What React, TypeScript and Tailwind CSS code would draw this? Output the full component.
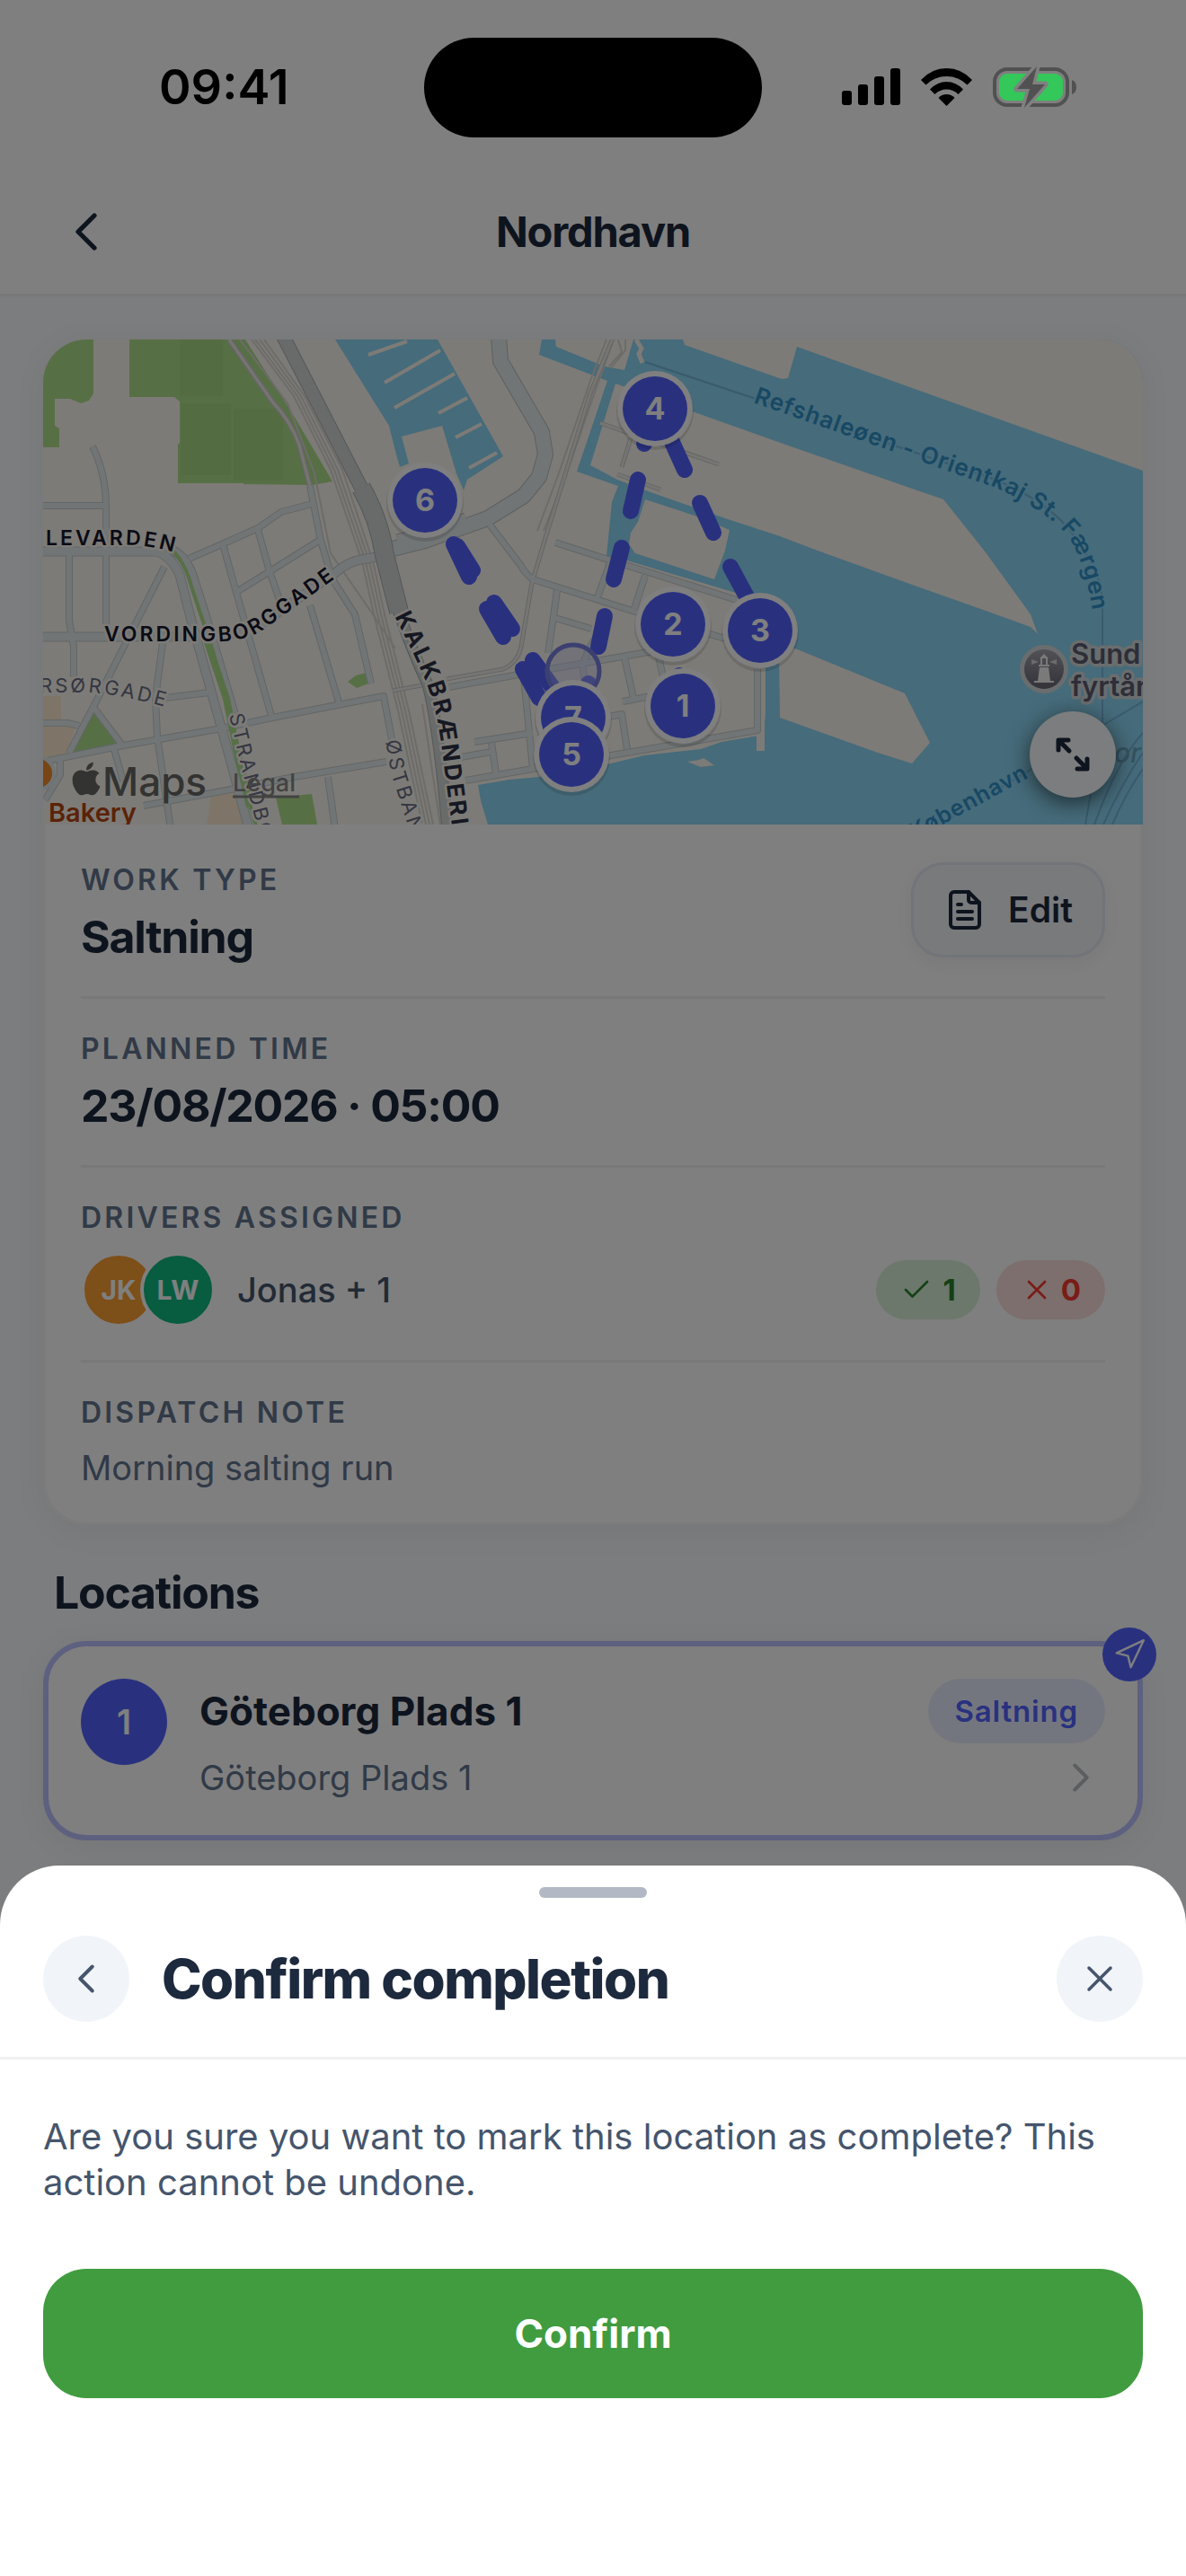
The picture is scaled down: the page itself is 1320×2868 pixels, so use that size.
import React from 'react'
import { Check, ChevronLeft, ChevronRight, Navigation, X } from 'lucide-react'
import { FaApple } from 'react-icons/fa'

const bigRoads = [
  { d: 'M507 -4 L509 24 L555 103 L559 128 L552 153 L535 174 L495 199 L425 224 L385 234', w: 16 },
  { d: 'M394 222 L430 212 L470 198', w: 9 },
]

const mainRoads = [
  { d: 'M267 -4 L354 165', w: 14 },
  { d: 'M354 165 Q374 200 380 240 L396 303', w: 20 },
  { d: 'M393 296 Q412 350 428 384 Q440 430 450 545', w: 11 },
]

const avenues = [
  'M-4 236 L125 236 Q142 240 152 262 L165 313 L205 456 L229 545',
  'M140 232 Q158 240 166 262 L179 303 L209 405 L213 420',
  'M-4 331 L192 331 L232 324 L325 260 Q340 246 360 244 L392 238',
]

const streets = [
  'M55 119 Q70 150 70 185 L70 317',
  'M0 185 L70 185',
  'M162 244 L199 228 L239 210 L265 192 L299 183',
  'M297 163 L309 224 L322 267 L347 306 L365 383',
  'M200 228 L225 317 L254 419',
  'M239 212 L252 258 L265 296',
  'M217 280 L307 224',
  'M297 296 L329 404',
  'M29 240 L29 313 L34 342 L34 376',
  'M135 253 L59 403 L29 460',
  'M133 338 L125 399 L127 442 L142 545',
  'M135 399 L185 393',
  'M-4 427 L27 427 L40 430',
  'M55 408 L89 453',
  'M5 469 L89 452 L199 433 L255 421 L379 397 L390 455',
  'M112 519 L209 501 L279 487 L382 470',
  'M317 487 L325 545',
  'M79 456 L89 492',
  'M19 469 L19 485 L2 513',
  'M497 206 L532 252 Q536 260 545 267 L659 303 L759 333',
  'M570 226 L632 246 L772 290',
  'M632 246 L617 287',
  'M670 263 L657 303',
  'M572 279 Q568 310 562 349',
  'M570 310 L610 322',
  'M622 322 L610 340 L600 362 L604 385',
  'M452 387 L535 372 L679 347',
  'M535 376 L545 478',
  'M647 354 L657 399',
  'M645 403 L682 396',
  'M685 353 L692 385',
  'M625 421 L644 417 L650 456',
  'M470 491 L545 478 L685 454 L795 435 L795 367',
  'M480 448 L545 438',
  'M499 449 L504 483',
  'M465 465 L499 459',
]

const paths = [
  'M635 -4 L609 60 L559 221 L544 271 L532 342 Q528 360 512 367 L449 378',
  'M389 391 L432 383',
  'M620 93 L752 139',
  'M654 110 L644 142',
  'M639 150 L687 167',
]

const rails = [
  'M232 0 L279 63 L320 145 L355 247 L369 310 L395 413 L422 540',
  'M236 0 L283 63 L324 145 L359 247 L373 310 L399 413 L426 540',
  'M241 0 L287 63 L328 145 L363 247 L377 310 L403 413 L430 540',
  'M246 0 L291 63 L333 145 L367 247 L381 310 L407 413 L434 540',
  'M219 0 L272 71 L302 149 L320 238 L365 303 L392 344',
  'M422 406 L442 540',
  'M627 0 L609 46 L574 149 L550 213',
  'M635 0 L617 50 L582 151 L557 213',
  'M640 0 L644 14 L630 30 M648 0 L648 12 L632 32',
]

const piers = [
  'M362 17 L405 2',
  'M380 48 L442 12',
  'M391 76 L458 38',
  'M440 82 L472 65',
  'M459 109 L488 94',
  'M474 143 L505 126',
]

const routeDashes = [
  'M670 112 L669 116',
  'M662 156 L654 191',
  'M644 232 L635 267',
  'M625 308 L618 342',
  'M607 383 L602 404',
  'M699 112 L714 145',
  'M731 182 L746 215',
  'M765 253 L785 290',
  'M708 374 L708 380',
  'M457 228 L474 264',
  'M461 230 L478 257',
  'M494 300 L512 331',
  'M502 293 L522 322',
  'M534 367 L552 399',
  'M545 357 L569 390',
]

const stops = [
  { n: 6, x: 425, y: 179 },
  { n: 4, x: 681, y: 77 },
  { n: 2, x: 701, y: 317 },
  { n: 3, x: 798, y: 324 },
  { n: 1, x: 712, y: 408 },
  { n: 7, x: 590, y: 421 },
  { n: 5, x: 588, y: 462 },
]

const land = '#faf6ee'
const water = '#8cd6f4'

function RouteMap() {
  return (
    <svg
      viewBox="0 0 1224 540"
      preserveAspectRatio="xMidYMid slice"
      className="block h-[540px] w-full"
      role="img"
      aria-label="Route map"
    >
      <defs>
        <path id="levarden" d="M3 229 L100 229 Q126 230 156 240" />
        <path id="vording" d="M68 336 L200 336 Q230 335 252 318 L350 248" />
        <path id="korsor" d="M-4 393 L55 393 Q95 397 150 413" />
        <path id="strand" d="M207 418 L221 478 L243 560" />
        <path id="ostban" d="M381 447 L388 485 L412 560" />
        <path id="kalk" d="M391 308 Q410 345 424 376 Q438 410 443 450 L460 580" />
        <path id="ferry" d="M790 70 L949 126 L1060 165 Q1115 190 1138 216 Q1165 250 1172 340" />
        <path id="havn" d="M970 557 L1122 474" />
        <linearGradient id="poi" x1="0" y1="0" x2="0" y2="1">
          <stop offset="0" stopColor="#a3a3ad" />
          <stop offset="1" stopColor="#666672" />
        </linearGradient>
      </defs>

      <rect width="1224" height="540" fill={land} />

      {/* parks and blocks */}
      <g fill="#aede8a">
        <path d="M0 0H56V60L51 68L42 71L30 66H13V96L18 99V120H0Z" />
        <path d="M96 0H225L279 85L322 158L300 162L223 161V160H150V117L152 115V69L146 64H96Z" />
        <path d="M55 413L85 452L32 462Z" />
        <path d="M339 381L348 374L360 371L362 383L349 388Z" />
        <path d="M259 510L299 506L305 540H266Z" />
      </g>
      <g fill="#a8d885">
        <rect x="152" width="48" height="63" />
        <rect x="154" y="71" width="55" height="80" />
        <rect x="212" y="77" width="55" height="80" />
      </g>
      <path d="M0 397H20V430H36L26 463L0 465ZM187 508L219 505L229 540H182Z" fill="#fdebd0" />

      {/* harbour */}
      <g fill={water}>
        <path d="M325 0L385 96L392 124L397 142L407 138L399 108L444 96L460 149L468 168L472 156L512 130L439 0Z" />
        <path d="M555 0L552 17L628 46L594 147L640 163L633 181L627 241L650 246L804 292V415L802 440L755 448L732 456L669 463L632 472L552 487L519 490L484 496L487 513L495 540H1224V0Z" />
      </g>
      <g fill={land}>
        <path d="M570 0L571 8L625 30L647 34L657 0Z" />
        <path d="M712 0L714 6L822 44L829 43L839 8L1224 146V0Z" />
        <path d="M637 49L725 81L832 119L1002 178L1049 237L1099 306L1107 328L1099 320L1052 303L945 265L862 235L820 219L759 199L679 171L639 156L609 140Z" />
        <path d="M670 178L725 196L764 212L759 235L747 267L659 238L652 228L654 215L662 203Z" />
        <path d="M650 250L772 290L804 302V367H770L650 330Z" />
        <path d="M819 342L837 344L959 394L987 449L967 472L929 460L820 421Z" />
        <path d="M794 415H803V458H794Z" />
        <path d="M717 470L730 468L735 466L747 474L732 476Z" />
      </g>
      <path d="M660 0L666 10L663 16L667 26" fill="none" stroke={land} strokeWidth="5" />
      <g fill="none" stroke={land} strokeWidth="4">
        {piers.map((d) => <path key={d} d={d} />)}
      </g>

      {/* ferry lanes */}
      <g fill="none" stroke="#74b4dc" strokeWidth="2">
        <path d="M670 25L790 65L1060 156Q1130 185 1155 230Q1179 260 1179 299V430L1160 540" />
        <path d="M1224 403L1182 428L979 552" />
        <path d="M1224 438Q1195 470 1170 540M1224 460Q1200 495 1180 540M1224 478Q1205 505 1190 540" />
      </g>

      {/* rail */}
      <g fill="none" stroke="#dcd8d2" strokeWidth="2">
        {rails.map((d) => <path key={d} d={d} />)}
      </g>
      <path d="M207 0L255 69Q275 90 285 117L297 163" fill="none" stroke="#cfcdcb" strokeWidth="6" />
      <path d="M207 0L255 69Q275 90 285 117L297 163" fill="none" stroke="#eeeae6" strokeWidth="3" />

      {/* streets: casing first, then fill */}
      <g fill="none" strokeLinejoin="round">
        <g stroke="#c4ccce">
          {paths.map((d) => <path key={d} d={d} strokeWidth="5" />)}
          {streets.map((d) => <path key={d} d={d} strokeWidth="8" />)}
          {avenues.map((d) => <path key={d} d={d} strokeWidth="11" />)}
        </g>
        {bigRoads.map((r) => <path key={r.d} d={r.d} stroke="#b8bfc0" strokeWidth={r.w + 2} />)}
        <g stroke="#eeebe5">
          {paths.map((d) => <path key={d} d={d} strokeWidth="3" />)}
        </g>
        <g stroke="#e3eaeb">
          {streets.map((d) => <path key={d} d={d} strokeWidth="6" />)}
          {avenues.map((d) => <path key={d} d={d} strokeWidth="9" />)}
          {bigRoads.map((r) => <path key={r.d} d={r.d} strokeWidth={r.w} />)}
        </g>
        <path d="M143 234Q158 248 165 275L190 350L204 400L216 470L238 545" stroke="#aede8a" strokeWidth="4" />
        <path d="M180 328L204 400L214 450L230 520" stroke="#aede8a" strokeWidth="8" />
        {mainRoads.map((r) => <path key={r.d} d={r.d} stroke="#a9b0b0" strokeWidth={r.w + 2} />)}
        {mainRoads.map((r) => <path key={r.d} d={r.d} stroke="#d0d6d5" strokeWidth={r.w} />)}
      </g>

      {/* street names */}
      <g fontFamily="Inter, sans-serif" stroke={land} strokeWidth="5" strokeLinejoin="round" paintOrder="stroke">
        <g fontSize="23" fontWeight="600" fill="#14172c" letterSpacing="3">
          <text><textPath href="#levarden">LEVARDEN</textPath></text>
          <text><textPath href="#vording">VORDINGBORGGADE</textPath></text>
        </g>
        <g fontSize="22" fill="#696c84" letterSpacing="3">
          <text><textPath href="#korsor">RSØRGADE</textPath></text>
          <text><textPath href="#strand">STRANDBO</textPath></text>
          <text><textPath href="#ostban">ØSTBAN</textPath></text>
        </g>
        <text fontSize="26" fontWeight="700" fill="#2c3044" letterSpacing="3">
          <textPath href="#kalk">KALKBRÆNDERI</textPath>
        </text>
      </g>
      <g fontFamily="Inter, sans-serif" fontWeight="600" fill="#3090c8" stroke={water} strokeWidth="4" paintOrder="stroke" letterSpacing="1">
        <text fontSize="26"><textPath href="#ferry">Refshaleøen - Orientkaj St. Færgen</textPath></text>
        <text fontSize="25"><textPath href="#havn">København</textPath></text>
      </g>
      <text x="1192" y="471" fontFamily="Inter, sans-serif" fontSize="30" fontStyle="italic" fontWeight="500" fill="#6aa6bf">or</text>

      {/* points of interest */}
      <g fontFamily="Inter, sans-serif" fontSize="31" fontWeight="600" fill="#5c5c70" stroke="#d3dadd" strokeWidth="7" strokeLinejoin="round" paintOrder="stroke">
        <text x="1144" y="361">Sund</text>
        <text x="1144" y="397">fyrtårn</text>
      </g>
      <circle cx="1114" cy="367" r="27" fill="#d3dadd" />
      <circle cx="1114" cy="367" r="22" fill="url(#poi)" />
      <g fill="#f4f4f4">
        <path d="M1109 365H1119L1121 380H1107Z" />
        <path d="M1103 380H1125V382H1103ZM1108 362H1120V364H1108ZM1109 355L1114 350L1119 355Z" />
        <path d="M1110 355H1112V362H1110ZM1116 355H1118V362H1116Z" />
        <path d="M1100 356L1108 359L1100 362ZM1128 356L1120 359L1128 362Z" opacity="0.7" />
      </g>
      <circle cx="-6" cy="483" r="20" fill="#e2e8ea" />
      <circle cx="-6" cy="483" r="16" fill="#f08a28" />
      <text x="6" y="537" fontFamily="Inter, sans-serif" fontSize="29" fontWeight="600" fill="#b5450f" stroke={land} strokeWidth="5" paintOrder="stroke">Bakery</text>

      <FaApple x={27} y={468} size={42} color="#666664" />
      <text x="66" y="508" fontFamily="Inter, sans-serif" fontSize="44" fontWeight="500" fill="#666664">Maps</text>
      <a href="#legal">
        <text x="211" y="503" fontFamily="Inter, sans-serif" fontSize="27" fontWeight="500" fill="#868684">Legal</text>
        <path d="M211 509H285" stroke="#868684" strokeWidth="3" />
      </a>

      {/* route */}
      <g fill="none" stroke="#5262fe" strokeWidth="18" strokeLinecap="round">
        {routeDashes.map((d) => <path key={d} d={d} />)}
      </g>
      <circle cx="590" cy="369" r="29" fill="#c9cdf5" fillOpacity="0.4" stroke="#7880e0" strokeWidth="5" />
      {stops.map((s) => (
        <g key={s.n}>
          <circle cx={s.x} cy={s.y + 3} r="43" fill="#000" opacity="0.12" />
          <circle cx={s.x} cy={s.y} r="42" fill="#fff" />
          <circle cx={s.x} cy={s.y} r="36" fill="#5262fe" />
          <text x={s.x} y={s.y + 12} textAnchor="middle" fontFamily="Inter, sans-serif" fontSize="34" fontWeight="700" fill="#fff">
            {s.n}
          </text>
        </g>
      ))}
    </svg>
  )
}

function StatusBar() {
  return (
    <div className="fixed inset-x-0 top-0 z-20 grid h-[194px] grid-cols-[1fr_376px_1fr] items-center">
      <div className="pl-[177px] text-[54px] font-semibold leading-[60px] text-black">09:41</div>
      <div className="h-[111px] rounded-full bg-black" />
      <div className="flex items-center justify-end gap-[23px] pr-[122px]">
        <svg width="65" height="42" viewBox="0 0 65 42">
          <rect x="0" y="25" width="11" height="16" rx="3" />
          <rect x="18" y="18" width="11" height="23" rx="3" />
          <rect x="36" y="9" width="11" height="32" rx="3" />
          <rect x="54" y="0" width="11" height="41" rx="3" />
        </svg>
        <svg width="57" height="42" viewBox="0 0 57 42">
          <path d="M0 13Q12 0 28.500 0Q45 0 57 13L51.500 18.500Q42 9 28.500 9Q15 9 5.500 18.500Z" />
          <path d="M10 23.500Q18 15 28.500 15Q39 15 47 23.500L41.500 29Q36 23.500 28.500 23.500Q21 23.500 15.500 29Z" />
          <path d="M19.500 33Q23 29 28.500 29Q34 29 37.500 33L28.500 42Z" />
        </svg>
        <svg width="93" height="46" viewBox="0 0 93 46">
          <rect x="2" y="3" width="81" height="40" rx="14" fill="none" stroke="#515151" strokeWidth="4" />
          <path d="M88 15Q93 17 93 23Q93 29 88 31Z" fill="#515151" />
          <rect x="7" y="8" width="71" height="30" rx="9" fill="#34c759" />
          <path d="M49 0L27 25H41L35 46L58 20H44Z" fill="#515151" stroke="#808080" strokeWidth="7" strokeLinejoin="round" paintOrder="stroke" />
        </svg>
      </div>
    </div>
  )
}

function Label({ children }: { children: React.ReactNode }) {
  return <div className="text-[32px] font-semibold leading-10 tracking-widest text-slate-500">{children}</div>
}

export default function App() {
  return (
    <div className="relative min-h-screen bg-slate-50 font-['Inter',sans-serif] text-slate-800">
      <header className="grid h-[330px] grid-cols-[1fr_auto_1fr] items-center border-b-[3px] border-[#f1f1f1] bg-white pt-[188px]">
        <button aria-label="Back" className="ml-[60px] w-[72px]">
          <ChevronLeft size={72} strokeWidth={1.75} />
        </button>
        <h1 className="text-[47px] font-bold leading-[60px] tracking-tight">Nordhavn</h1>
      </header>

      <main className="px-12 pt-12">
        <section className="overflow-hidden rounded-[48px] bg-white shadow-[0_6px_36px_rgba(15,23,42,0.06)]">
          <div className="relative">
            <RouteMap />
            <button
              aria-label="Expand map"
              className="absolute bottom-[30px] right-[30px] flex size-24 items-center justify-center rounded-full bg-slate-50 shadow-[0_6px_24px_rgba(0,0,0,0.6)]"
            >
              <svg width="38" height="38" viewBox="0 0 38 38" fill="none" stroke="currentColor" strokeWidth="5" strokeLinecap="round" strokeLinejoin="round">
                <path d="M3 14V3H14M4 4L15 15" />
                <path d="M35 24V35H24M34 34L23 23" />
              </svg>
            </button>
          </div>

          <div className="rounded-b-[48px] border-[3px] border-t-0 border-[#f6f6f6] px-[39px] pt-[6px]">
            <div className="flex items-start justify-between border-b-[3px] border-[#f0f0f0] py-9">
              <div>
                <Label>WORK TYPE</Label>
                <div className="mt-[13px] text-[50px] font-bold leading-[60px] tracking-tight">Saltning</div>
              </div>
              <button className="flex h-[106px] items-center gap-[30px] rounded-[36px] border-[3px] border-slate-200 bg-slate-100 pl-[39px] pr-[33px] text-[39px] font-semibold shadow-[0_6px_24px_rgba(15,23,42,0.06)]">
                <svg width="36" height="44" viewBox="0 0 36 44" fill="none" stroke="currentColor" strokeWidth="4" strokeLinecap="round" strokeLinejoin="round">
                  <path d="M6 2H22L34 14V38A4 4 0 0 1 30 42H6A4 4 0 0 1 2 38V6A4 4 0 0 1 6 2Z" />
                  <path d="M22 2V11A3 3 0 0 0 25 14H34M10 16H14M10 24H26M10 32H26" />
                </svg>
                Edit
              </button>
            </div>

            <div className="border-b-[3px] border-[#f0f0f0] py-9">
              <Label>PLANNED TIME</Label>
              <div className="mt-[13px] text-[50px] font-bold leading-[60px] tracking-tight">23/08/2026 · 05:00</div>
            </div>

            <div className="border-b-[3px] border-[#f0f0f0] py-9">
              <Label>DRIVERS ASSIGNED</Label>
              <div className="mt-[18px] flex items-center">
                <div className="flex text-[30px] font-bold text-white">
                  <div className="flex size-[84px] items-center justify-center rounded-full border-4 border-white bg-[#fb9e32]">JK</div>
                  <div className="-ml-[18px] flex size-[84px] items-center justify-center rounded-full border-4 border-white bg-[#10b981]">LW</div>
                </div>
                <div className="ml-6 text-[38px] font-medium text-slate-600">Jonas + 1</div>
                <div className="ml-auto flex gap-[18px] text-[33px] font-bold leading-[66px]">
                  <div className="flex items-center gap-3 rounded-full bg-[#d8f0d8] px-[27px] text-[#28802c]">
                    <Check size={36} strokeWidth={1.75} />
                    1
                  </div>
                  <div className="flex items-center gap-[9px] rounded-full bg-[#f8dedb] px-[27px] text-[#f5382e]">
                    <X size={36} strokeWidth={1.75} />
                    0
                  </div>
                </div>
              </div>
            </div>

            <div className="py-9">
              <Label>DISPATCH NOTE</Label>
              <p className="mt-4 text-[38px] leading-[50px] text-slate-500">Morning salting run</p>
            </div>
          </div>
        </section>

        <h2 className="mb-6 mt-[45px] px-3 text-[50px] font-bold leading-[60px] tracking-tight">Locations</h2>

        <section className="relative flex gap-9 rounded-[48px] border-[6px] border-[#bbc0ff] bg-white px-9 pb-[38px] pt-9 shadow-[0_6px_36px_rgba(15,23,42,0.06)]">
          <div className="flex size-24 items-center justify-center rounded-full bg-[#5262fe] text-[38px] font-semibold text-white">1</div>
          <div className="flex-1">
            <div className="flex h-[72px] items-center justify-between">
              <h3 className="text-[44px] font-bold">Göteborg Plads 1</h3>
              <span className="rounded-full bg-[#e8ecff] px-[30px] text-[33px] font-semibold leading-[72px] tracking-wide text-[#5262fe]">Saltning</span>
            </div>
            <div className="mt-3 flex h-[52px] items-center justify-between">
              <p className="text-[38px] text-slate-500">Göteborg Plads 1</p>
              <ChevronRight size={54} strokeWidth={1.75} className="text-[#b4bcc2]" />
            </div>
          </div>
          <div className="absolute -right-[21px] -top-[21px] flex size-[60px] items-center justify-center rounded-full bg-[#5262fe] text-white">
            <Navigation size={38} strokeWidth={1.5} />
          </div>
        </section>
      </main>

      <div className="fixed inset-0 z-10 flex flex-col justify-end bg-black/50">
        <div role="dialog" aria-labelledby="sheet-title" className="rounded-t-[66px] bg-white pb-[198px] pt-6">
          <div className="mx-auto h-3 w-[120px] rounded-full bg-[#b2b9c5]" />
          <div className="flex items-center border-b-[3px] border-[#f1f1f1] px-12 pb-[39px] pt-[42px]">
            <button aria-label="Back" className="flex size-24 items-center justify-center rounded-full bg-slate-100 text-slate-600">
              <ChevronLeft size={54} strokeWidth={1.75} />
            </button>
            <h2 id="sheet-title" className="ml-9 text-[60px] font-extrabold leading-[72px] tracking-tight">Confirm completion</h2>
            <button aria-label="Close" className="ml-auto flex size-24 items-center justify-center rounded-full bg-slate-100 text-slate-600">
              <X size={48} strokeWidth={1.75} />
            </button>
          </div>
          <div className="px-12 pt-[60px]">
            <p className="text-[40px] leading-[51px] text-slate-600">
              Are you sure you want to mark this location as complete? This action cannot be undone.
            </p>
            <button className="mt-[71px] h-36 w-full rounded-[48px] bg-[#409c3f] text-[44px] font-bold text-white">Confirm</button>
          </div>
        </div>
      </div>

      <StatusBar />
    </div>
  )
}
